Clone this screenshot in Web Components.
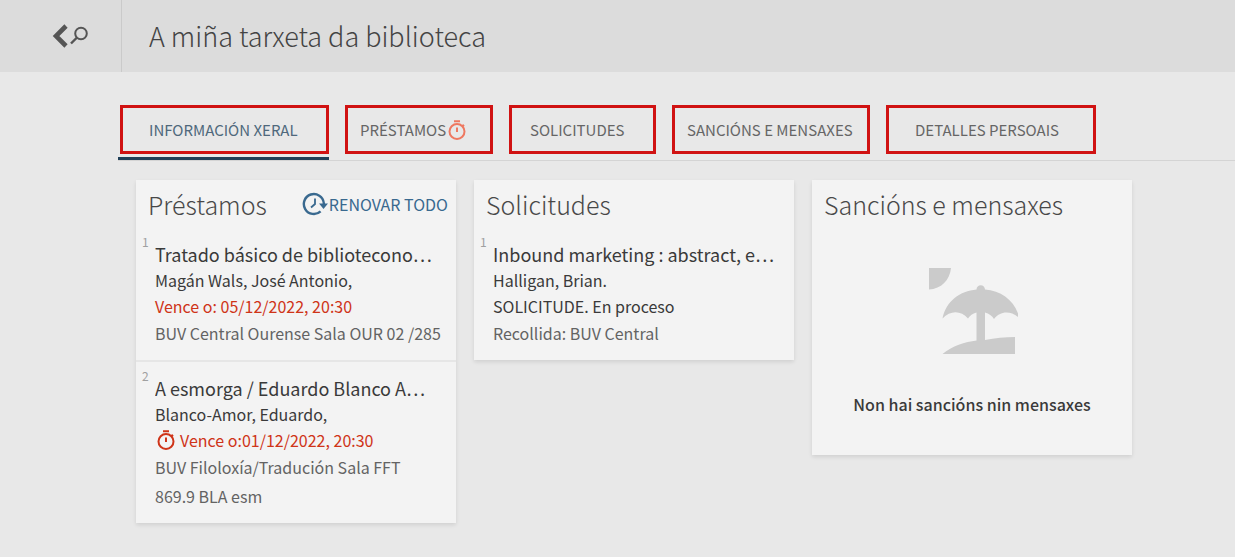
<!DOCTYPE html>
<html lang="gl">
<head>
<meta charset="utf-8">
<title>A miña tarxeta da biblioteca</title>
<style>
  html { background: #e8e8e8; }
  body {
    margin: 0;
    font-family: "Noto Sans CJK KR", "Noto Sans", sans-serif;
    font-size: 16px;
    line-height: 26px;
    color: #3a3a3a;
  }
</style>
</head>
<body>
<library-account></library-account>

<script>
const define = (name, markup, setup) => {
  const template = document.createElement('template');
  template.innerHTML = markup;
  customElements.define(name, class extends HTMLElement {
    constructor() {
      super();
      this.attachShadow({ mode: 'open' }).append(template.content.cloneNode(true));
    }
    connectedCallback() {
      if (setup) setup(this, this.shadowRoot);
    }
  });
};

/* Stopwatch drawn in the current text colour */
define('timer-icon', `
  <style>
    :host { display: block; width: 20px; height: 20px; flex: none; }
    svg { display: block; }
  </style>
  <svg width="20" height="20" viewBox="0 0 20 20" fill="none" stroke="currentColor" stroke-width="2" aria-hidden="true">
    <circle cx="10" cy="11.5" r="7.5"/>
    <path d="M7 1.2h6M10 7.5v4.5M15.4 4.8l1.6 1.6"/>
  </svg>
`);

define('page-header', `
  <style>
    :host { display: flex; height: 72px; background: #dcdcdc; }
    button {
      display: flex; align-items: center; justify-content: flex-end;
      box-sizing: border-box; width: 122px; padding: 0 32px 0 0;
      border: 0; border-right: 1px solid #cacaca;
      background: none; color: #555; cursor: pointer;
    }
    svg { display: block; }
    h1 {
      margin: 0; padding-left: 27px;
      font-size: 27px; font-weight: 300; line-height: 72px; color: #444;
    }
  </style>
  <button type="button" aria-label="Volver á busca">
    <svg width="38" height="26" viewBox="0 0 38 26" fill="none" stroke="currentColor" aria-hidden="true">
      <path d="M15 3 5 13l10 10" stroke-width="4.600"/>
      <circle cx="30" cy="10.500" r="5.800" stroke-width="2"/>
      <path d="M26 14.500 20 20.500" stroke-width="2.400"/>
    </svg>
  </button>
  <h1><slot></slot></h1>
`);

define('tab-bar', `
  <style>
    :host { display: block; margin-left: 118px; border-bottom: 1px solid #d4d4d4; }
    nav { display: flex; gap: 16px; }
  </style>
  <nav aria-label="Seccións"><slot></slot></nav>
`);

/* One tab; --start and --width set the lead-in and the frame of each */
define('tab-item', `
  <style>
    :host { display: block; height: 55px; box-sizing: border-box; }
    :host([active]) { border-bottom: 3px solid #1f3f57; padding-left: 2px; margin-bottom: -1px; }
    a {
      display: flex; align-items: center; gap: 1px; box-sizing: border-box;
      width: var(--width); height: 49px; padding-left: var(--start);
      border: 3px solid #d01212;
      font-size: 15px; white-space: nowrap; text-decoration: none; color: #666;
    }
    :host([active]) a { color: #4f687c; }
    ::slotted(timer-icon) { color: #ee7860; }
  </style>
  <a href="#"><slot></slot><slot name="icon"></slot></a>
`);

define('account-card', `
  <style>
    :host { display: block; background: #f3f3f3; box-shadow: 0 2px 4px rgba(0, 0, 0, .1); }
    header { display: flex; align-items: center; justify-content: space-between; height: 48px; padding: 0 8px 0 12px; }
    h2 { margin: 0; font-size: 25px; font-weight: 300; line-height: 32px; color: #484848; white-space: nowrap; }
  </style>
  <section>
    <header><h2></h2><slot name="action"></slot></header>
    <slot></slot>
  </section>
`, (host, root) => { root.querySelector('h2').textContent = host.getAttribute('heading'); });

define('renew-button', `
  <style>
    :host { display: block; }
    button {
      display: flex; align-items: center; gap: 1px; padding: 0; border: 0;
      background: none; color: #39698f; font: inherit; white-space: nowrap; cursor: pointer;
    }
    svg { display: block; }
  </style>
  <button type="button">
    <svg width="26" height="24" viewBox="0 0 26 24" fill="none" stroke="currentColor" stroke-width="2.400" aria-hidden="true">
      <path d="M18.600 19.400A10 10 0 1 1 21.800 11v1.500"/>
      <path d="M13 6.500v5.500l-4 3.500" stroke-width="1.800"/>
      <path d="M17 11.500h9l-4.500 5.500z" fill="currentColor" stroke="none"/>
    </svg>
    <slot></slot>
  </button>
`);

define('record-item', `
  <style>
    :host { display: flex; padding: 4px 16px 12px 6px; }
    :host(:not(:first-of-type)) { border-top: 2px solid #e6e6e6; }
    .number { flex: none; width: 13px; font-size: 12px; line-height: 20px; color: #a0a0a0; }
    .body { flex: 1; min-width: 0; padding-top: 9px; }
    h3 { margin: 0; font-size: 18px; font-weight: 400; line-height: 26px; white-space: nowrap; overflow: hidden; }
  </style>
  <span class="number"></span>
  <div class="body"><h3></h3><slot></slot></div>
`, (host, root) => {
  root.querySelector('.number').textContent = host.getAttribute('number');
  root.querySelector('h3').textContent = host.getAttribute('heading');
});

define('record-line', `
  <style>
    :host { display: flex; align-items: center; gap: 4px; line-height: 26px; white-space: nowrap; }
    :host([kind="due"]) { color: #cf3418; }
    :host([kind="place"]) { color: #636363; line-height: 29px; }
    ::slotted(timer-icon) { margin-left: 1px; }
  </style>
  <slot name="icon"></slot><span><slot></slot></span>
`);

define('empty-state', `
  <style>
    :host { display: flex; flex-direction: column; align-items: center; gap: 34px; padding: 40px 0 37px; }
    svg { display: block; }
    p { margin: 0; line-height: 28px; font-weight: 500; }
  </style>
  <svg width="92" height="88" viewBox="0 0 92 88" fill="#cbcbcb" aria-hidden="true">
    <path d="M3 0h22c-1 12-10 21-22 21.500z"/>
    <path d="M16.500 50.500C20 33 34 23 50.500 21.500a4.200 4.200 0 1 1 8.500 0C76 23 89.500 33 93.500 50.500 85 42 74 43 68 51c-2-3-5-5.500-9-6.500V72c10-2 20-3 30-3v17H16.500C26 78 39 74 50.500 72.500V44.500c-4 1-6.500 3-8.500 6-7-8-17.500-8.500-25.500 0z"/>
  </svg>
  <p><slot></slot></p>
`);

define('library-account', `
  <style>
    :host { display: block; }
    tab-bar { margin-top: 33px; }
    main {
      display: grid; grid-template-columns: repeat(3, minmax(0, 320px));
      align-items: start; gap: 18px; padding: 19px 24px 33px 136px;
    }
  </style>
  <page-header>A miña tarxeta da biblioteca</page-header>
  <tab-bar>
    <tab-item active style="--width: 209px; --start: 26px">INFORMACIÓN XERAL</tab-item>
    <tab-item style="--width: 148px; --start: 12px">PRÉSTAMOS<timer-icon slot="icon"></timer-icon></tab-item>
    <tab-item style="--width: 147px; --start: 18px">SOLICITUDES</tab-item>
    <tab-item style="--width: 198px; --start: 12px">SANCIÓNS E MENSAXES</tab-item>
    <tab-item style="--width: 210px; --start: 26px">DETALLES PERSOAIS</tab-item>
  </tab-bar>
  <main>
    <account-card heading="Préstamos">
      <renew-button slot="action">RENOVAR TODO</renew-button>
      <record-item number="1" heading="Tratado básico de bibliotecono…">
        <record-line>Magán Wals, José Antonio,</record-line>
        <record-line kind="due">Vence o: 05/12/2022, 20:30</record-line>
        <record-line kind="place">BUV Central Ourense Sala OUR 02 /285</record-line>
      </record-item>
      <record-item number="2" heading="A esmorga / Eduardo Blanco A…">
        <record-line>Blanco-Amor, Eduardo,</record-line>
        <record-line kind="due"><timer-icon slot="icon"></timer-icon>Vence o:01/12/2022, 20:30</record-line>
        <record-line kind="place">BUV Filoloxía/Tradución Sala FFT</record-line>
        <record-line kind="place">869.9 BLA esm</record-line>
      </record-item>
    </account-card>
    <account-card heading="Solicitudes">
      <record-item number="1" heading="Inbound marketing : abstract, e…">
        <record-line>Halligan, Brian.</record-line>
        <record-line>SOLICITUDE. En proceso</record-line>
        <record-line kind="place">Recollida: BUV Central</record-line>
      </record-item>
    </account-card>
    <account-card heading="Sancións e mensaxes">
      <empty-state>Non hai sancións nin mensaxes</empty-state>
    </account-card>
  </main>
`);
</script>
</body>
</html>
